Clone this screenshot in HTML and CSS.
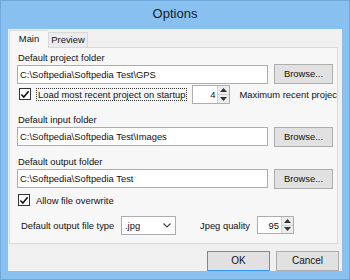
FILE: index.html
```html
<!DOCTYPE html>
<html lang="en">

<head>
    <meta charset="UTF-8">
    <title>Options</title>
    <link rel="stylesheet" href="styles.css">
</head>

<body>
    <div class="window">
        <div class="titlebar">Options</div>
        <div class="client">
            <div class="tabs">
                <div class="tab active">Main</div>
                <div class="tab">Preview</div>
            </div>
            <section class="panel">
                <div class="label">Default project folder</div>
                <div class="row">
                    <div class="textbox">C:\Softpedia\Softpedia Test\GPS</div>
                    <div class="btn browse">Browse...</div>
                </div>
                <div class="row checkrow">
                    <span class="checkbox checked">
                        <svg width="11" height="11" viewBox="0 0 11 11"><path d="M1.5 5.5 L4.2 8.3 L9.5 2" fill="none" stroke="#111" stroke-width="1.7"/></svg>
                    </span>
                    <span class="checklabel focus">Load most recent project on startup</span>
                    <div class="spinner recent">
                        <span class="value">4</span>
                        <span class="arrows">
                            <span class="arrow"><svg width="7" height="4" viewBox="0 0 7 4"><path d="M0 4 L3.5 0 L7 4 Z" fill="#333"/></svg></span>
                            <span class="arrow"><svg width="7" height="4" viewBox="0 0 7 4"><path d="M0 0 L3.5 4 L7 0 Z" fill="#333"/></svg></span>
                        </span>
                    </div>
                    <span class="maxlabel">Maximum recent projects:</span>
                </div>
                <div class="label gap">Default input folder</div>
                <div class="row">
                    <div class="textbox">C:\Softpedia\Softpedia Test\Images</div>
                    <div class="btn browse">Browse...</div>
                </div>
                <div class="label gap">Default output folder</div>
                <div class="row">
                    <div class="textbox">C:\Softpedia\Softpedia Test</div>
                    <div class="btn browse">Browse...</div>
                </div>
                <div class="row allowrow">
                    <span class="checkbox checked">
                        <svg width="11" height="11" viewBox="0 0 11 11"><path d="M1.5 5.5 L4.2 8.3 L9.5 2" fill="none" stroke="#111" stroke-width="1.7"/></svg>
                    </span>
                    <span class="checklabel">Allow file overwrite</span>
                </div>
                <div class="row filerow">
                    <span class="filelabel">Default output file type</span>
                    <div class="select">
                        <span>.jpg</span>
                        <svg width="8" height="5" viewBox="0 0 8 5"><path d="M0.5 0.5 L4 4 L7.5 0.5" fill="none" stroke="#444" stroke-width="1.2"/></svg>
                    </div>
                    <span class="qualitylabel">Jpeg quality</span>
                    <div class="spinner quality">
                        <span class="value">95</span>
                        <span class="arrows">
                            <span class="arrow"><svg width="7" height="4" viewBox="0 0 7 4"><path d="M0 4 L3.5 0 L7 4 Z" fill="#333"/></svg></span>
                            <span class="arrow"><svg width="7" height="4" viewBox="0 0 7 4"><path d="M0 0 L3.5 4 L7 0 Z" fill="#333"/></svg></span>
                        </span>
                    </div>
                </div>
            </section>
            <div class="buttons">
                <div class="btn dialog default">OK</div>
                <div class="btn dialog">Cancel</div>
            </div>
        </div>
    </div>
</body>

</html>
```

FILE: styles.css
```css
body {
    margin: 0;
    background-color: #88c1ef;
    font-family: 'Liberation Sans', Arial, sans-serif;
    font-size: 9.4px;
    color: #111;
}

.window {
    box-sizing: border-box;
    width: 350px;
    height: 280px;
    background-color: #88c1ef;
    border: 1px solid #6fa9dc;
    display: flex;
    flex-direction: column;
}

.titlebar {
    height: 28px;
    line-height: 26px;
    text-align: center;
    font-size: 13px;
    color: #1a1a1a;
}

.client {
    flex: 1;
    margin: 0 7px 8px 7px;
    padding: 1px 0 0 1px;
    background-color: #f0f0f0;
    display: flex;
    flex-direction: column;
}

.tabs {
    display: flex;
    align-items: flex-end;
    height: 17px;
    position: relative;
    z-index: 1;
}

.tab {
    box-sizing: border-box;
    height: 15px;
    width: 40px;
    border: 1px solid #d9d9d9;
    border-bottom: none;
    background-color: #ececec;
    text-align: center;
    line-height: 14px;
}

.tab.active {
    width: 39px;
    height: 18px;
    margin-bottom: -1px;
    background-color: #f7f7f7;
    line-height: 16px;
    border-right: none;
}

.panel {
    box-sizing: border-box;
    width: 329px;
    height: 197px;
    border: 1px solid #d9d9d9;
    background-color: #f7f7f7;
    padding: 4px 0 0 7px;
    overflow: hidden;
    display: flex;
    flex-direction: column;
}

.label {
    height: 12px;
    line-height: 12px;
    padding-left: 1px;
}

.label.gap {
    margin-top: 10px;
}

.row {
    display: flex;
    align-items: center;
    height: 20px;
}

.row > * {
    flex-shrink: 0;
}

.label.gap + .row {
    margin-top: 1px;
    height: 19px;
}

.textbox {
    box-sizing: border-box;
    width: 251px;
    height: 19px;
    background-color: #fff;
    border: 1px solid #abadb3;
    padding-left: 2px;
    line-height: 17px;
    white-space: nowrap;
}

.btn {
    box-sizing: border-box;
    border: 1px solid #adadad;
    background-color: #e1e1e1;
    text-align: center;
    white-space: nowrap;
}

.browse {
    width: 59px;
    height: 20px;
    line-height: 18px;
    margin-left: 6px;
}

.checkbox {
    box-sizing: border-box;
    width: 12px;
    height: 12px;
    border: 1px solid #333;
    background-color: #fff;
    display: flex;
    align-items: center;
    justify-content: center;
}

.checkrow .checkbox {
    margin-left: 2px;
}

.checklabel {
    margin-left: 5px;
    padding: 0 1px;
    border: 1px dotted transparent;
    line-height: 11px;
    white-space: nowrap;
}

.checklabel.focus {
    border-color: #333;
}

.spinner {
    box-sizing: border-box;
    height: 19px;
    background-color: #fff;
    border: 1px solid #abadb3;
    display: flex;
    align-items: stretch;
}

.spinner .value {
    flex: 1;
    text-align: right;
    line-height: 17px;
    padding-right: 2px;
}

.arrows {
    width: 11px;
    display: flex;
    flex-direction: column;
    border-left: 1px solid #d0d0d0;
}

.arrow {
    flex: 1;
    display: flex;
    align-items: center;
    justify-content: center;
    background-color: #ececec;
}

.arrow + .arrow {
    border-top: 1px solid #d0d0d0;
}

.spinner.recent {
    width: 38px;
    margin-left: 5px;
}

.maxlabel {
    margin-left: 9px;
    white-space: nowrap;
}

.allowrow {
    margin-top: 5px;
    height: 14px;
}

.allowrow .checkbox {
    margin-left: 1px;
}

.allowrow .checklabel {
    margin-left: 4px;
}

.filerow {
    margin-top: 8px;
}

.filelabel {
    margin-left: 4px;
    width: 100px;
}

.select {
    box-sizing: border-box;
    width: 55px;
    height: 19px;
    background-color: #fff;
    border: 1px solid #abadb3;
    display: flex;
    align-items: center;
    justify-content: space-between;
    padding: 0 4px 0 3px;
}

.qualitylabel {
    margin-left: 24px;
    width: 57px;
}

.spinner.quality {
    width: 37px;
    height: 18px;
}

.buttons {
    display: flex;
    justify-content: flex-end;
    gap: 6px;
    margin-top: 7px;
    padding-right: 3px;
}

.dialog {
    width: 63px;
    height: 20px;
    line-height: 18px;
    font-size: 10px;
}

.dialog.default {
    border-color: #3399ff;
}
```
